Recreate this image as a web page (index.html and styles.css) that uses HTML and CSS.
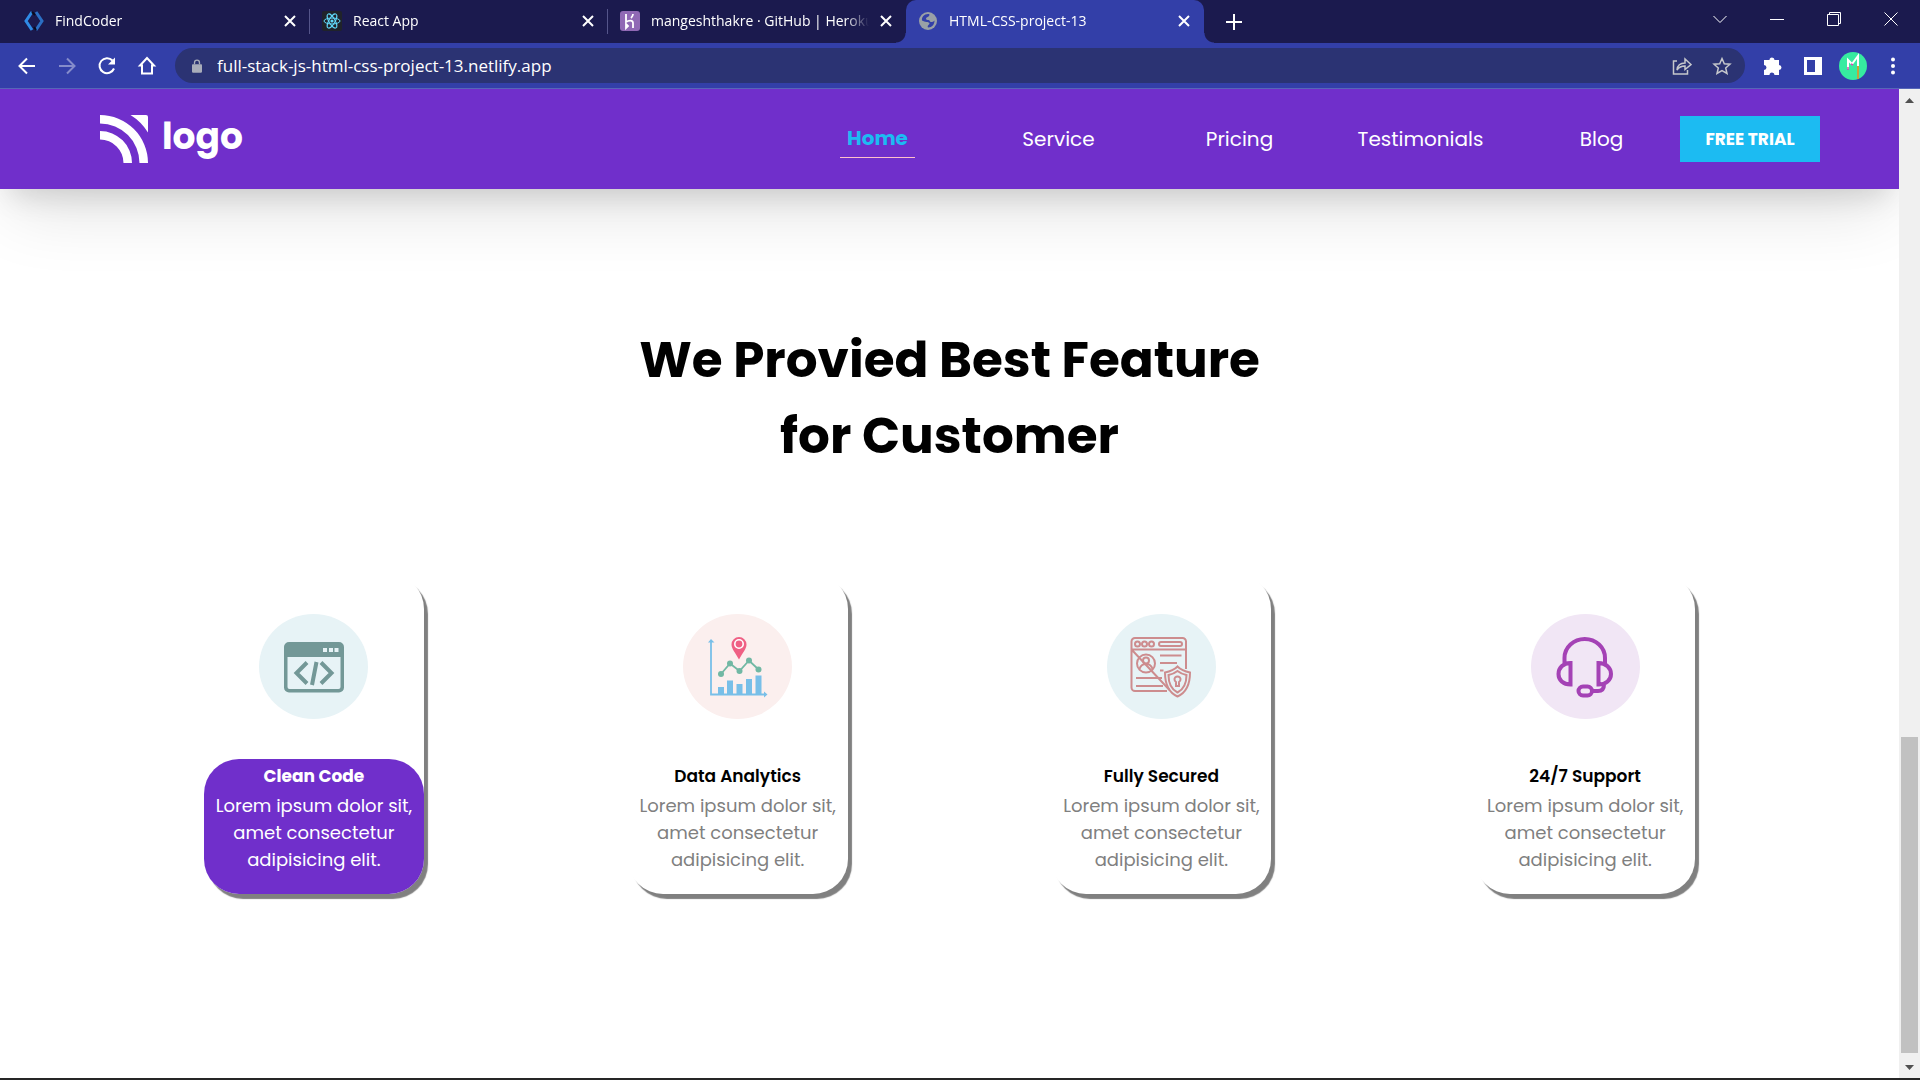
FILE: index.html
```html
<!DOCTYPE html>
<html lang="en">
<head>
<meta charset="utf-8">
<title>HTML-CSS-project-13</title>
<link rel="stylesheet" href="styles.css">
</head>
<body>
<div class="browser">
  <div class="tabstrip">
    <div class="tab">
      <svg class="favicon" viewBox="0 0 20 20" fill="none"><path d="M8 1 2 10l6 9" stroke="#2f8be6" stroke-width="3"/><path d="m12 1 6 9-6 9" stroke="#2b6fc4" stroke-width="3"/><path d="m8 1 3 3M12 19l-2-3" stroke="#0b0b1c" stroke-width="2"/></svg>
      <span class="tab-title">FindCoder</span>
      <button class="tab-close" aria-label="Close tab"><svg viewBox="0 0 12 12"><path d="m1 1 10 10M11 1 1 11"/></svg></button>
    </div>
    <div class="tab">
      <svg class="favicon" viewBox="0 0 20 20" fill="none"><rect width="20" height="20" rx="2" fill="#20232a"/><g stroke="#61dafb"><ellipse cx="10" cy="10" rx="8" ry="3"/><ellipse cx="10" cy="10" rx="8" ry="3" transform="rotate(60 10 10)"/><ellipse cx="10" cy="10" rx="8" ry="3" transform="rotate(120 10 10)"/></g><circle cx="10" cy="10" r="1.6" fill="#61dafb"/></svg>
      <span class="tab-title">React App</span>
      <button class="tab-close" aria-label="Close tab"><svg viewBox="0 0 12 12"><path d="m1 1 10 10M11 1 1 11"/></svg></button>
    </div>
    <div class="tab tab-last">
      <svg class="favicon" viewBox="0 0 20 20" fill="none"><rect width="20" height="20" rx="3" fill="#9069b5"/><path d="M6 3v8c3-2 7-2 7 1v5M13 3c0 2-1 3-2 4M6 13v4l2-2z" stroke="#fff" stroke-width="1.8"/></svg>
      <span class="tab-title">mangeshthakre · GitHub | Heroku</span>
      <button class="tab-close" aria-label="Close tab"><svg viewBox="0 0 12 12"><path d="m1 1 10 10M11 1 1 11"/></svg></button>
    </div>
    <div class="tab tab-active">
      <svg class="favicon" viewBox="0 0 20 20"><circle cx="10" cy="10" r="9" fill="#9aa0a6"/><path d="M10 3c1.500 0 2 .5 1 2s-3 1-3 2.500 1 1.500 2.500 1.500 1 2 2.500 2 2.500-.5 3.500-1.500c0 4-2.500 7-6 7-1 0-1-1-.5-2s1.500-1 1.500-2-1.500-1.500-3-1.500-3-1-4.500-1.500C3.500 6 6 3 10 3z" fill="#333fa8"/></svg>
      <span class="tab-title">HTML-CSS-project-13</span>
      <button class="tab-close" aria-label="Close tab"><svg viewBox="0 0 12 12"><path d="m1 1 10 10M11 1 1 11"/></svg></button>
    </div>
    <button class="tab-new" aria-label="New tab"><svg viewBox="0 0 16 16"><path d="M8 0v16M0 8h16"/></svg></button>
    <div class="window-controls">
      <button aria-label="Search tabs"><svg viewBox="0 0 14 14"><path d="m.5 4 6.500 6.500L13.500 4"/></svg></button>
      <button aria-label="Minimize"><svg viewBox="0 0 14 14"><path d="M0 7.500h14"/></svg></button>
      <button aria-label="Restore"><svg viewBox="0 0 14 14"><path d="M.5 2.500h11v11H.5zM2.500 2.500v-2h11v11h-2"/></svg></button>
      <button aria-label="Close"><svg viewBox="0 0 14 14"><path d="m.5.5 13 13M13.500.5l-13 13"/></svg></button>
    </div>
  </div>

  <div class="toolbar">
    <button class="tool" aria-label="Back"><svg viewBox="0 0 20 20"><path d="M18 10H3M10 2.500 2.500 10l7.500 7.500"/></svg></button>
    <button class="tool tool-off" aria-label="Forward"><svg viewBox="0 0 20 20"><path d="M2 10h15M10 2.500l7.500 7.500-7.500 7.500"/></svg></button>
    <button class="tool" aria-label="Reload"><svg viewBox="0 0 20 20"><path d="M17 12.500A7.500 7.500 0 1 1 15.500 4.500"/><path d="M18 1.500V8.500h-7z" class="solid"/></svg></button>
    <button class="tool" aria-label="Home"><svg viewBox="0 0 20 20"><path d="M5 17.500V9.500H3L10 2l7 7.500H15v8z"/></svg></button>
    <div class="address">
      <svg class="lock" viewBox="0 0 12 16"><rect y="6" width="12" height="10" rx="1" fill="#a9adba"/><path d="M3 6V4a3 3 0 0 1 6 0v2" fill="none" stroke="#a9adba" stroke-width="1.600"/></svg>
      <input class="url" type="text" aria-label="Address" value="full-stack-js-html-css-project-13.netlify.app">
      <button class="tool tool-dim" aria-label="Share"><svg viewBox="0 0 20 20"><path d="M5 5H1.500v13h14v-4M5 14c.5-5 3-7 8-7V3l6 5.500-6 5V10c-4 0-6 1-8 4z"/></svg></button>
      <button class="tool tool-dim" aria-label="Bookmark"><svg viewBox="0 0 20 20"><path d="m10 2.500 2.300 5.200 5.700.5-4.300 3.800 1.300 5.500L10 14.600 5 17.500 6.300 12 2 8.200l5.700-.5z"/></svg></button>
    </div>
    <button class="tool" aria-label="Extensions"><svg viewBox="0 0 20 20"><path class="solid" d="M1 4h5.500a2.500 2.500 0 0 1 5 0H16v5a2.500 2.500 0 0 1 0 5v5h-4.500a2.500 2.500 0 0 0-5 0H1v-5a2.500 2.500 0 0 0 0-5z"/></svg></button>
    <button class="tool" aria-label="Side panel"><svg viewBox="0 0 20 20"><path class="solid" fill-rule="evenodd" d="M1 1h18v18H1zM4 4v12h8V4z"/></svg></button>
    <button class="tool" aria-label="Profile"><svg class="avatar" viewBox="0 0 28 28"><circle cx="14" cy="14" r="14" fill="#36eba0"/><path d="M19 12v15" stroke="#c2a33c" stroke-width="2"/><path d="M9 17V8l4 4 6-8v10" stroke="#fff" stroke-width="2"/><path d="M9 15v3M12 12l2 1" stroke="#d24bb0" stroke-width="1.500"/></svg></button>
    <button class="tool" aria-label="Menu"><svg viewBox="0 0 20 20"><g class="solid"><circle cx="10" cy="3.500" r="2"/><circle cx="10" cy="10" r="2"/><circle cx="10" cy="16.500" r="2"/></g></svg></button>
  </div>

  <div class="viewport">
    <div class="page">
      <header class="site-header">
        <a class="brand" href="#">
          <svg class="brand-mark" viewBox="0 0 48 48" fill="#fff"><path d="M0 0a48 48 0 0 1 48 48h-8.500A39.500 39.500 0 0 0 0 8.500zM0 16a32 32 0 0 1 32 32h-8.500A23.500 23.500 0 0 0 0 24.500zM30.500 0H46a2 2 0 0 1 2 2v15.500A54 54 0 0 0 30.500 0z"/></svg>
          <span class="brand-name">logo</span>
        </a>
        <nav class="site-nav">
          <a class="nav-link nav-current" href="#">Home</a>
          <a class="nav-link" href="#">Service</a>
          <a class="nav-link" href="#">Pricing</a>
          <a class="nav-link" href="#">Testimonials</a>
          <a class="nav-link" href="#">Blog</a>
        </nav>
        <button class="trial">FREE TRIAL</button>
      </header>

      <main class="features">
        <h1>We Provied Best Feature<br>for Customer</h1>
        <div class="cards">
          <article class="card card-active">
            <div class="badge badge-aqua">
              <svg viewBox="0 0 60 60"><path fill="#739897" fill-rule="evenodd" d="M5 5h50a5 5 0 0 1 5 5v40.500a5 5 0 0 1-5 5H5a5 5 0 0 1-5-5V10a5 5 0 0 1 5-5zM3.500 20v30a2 2 0 0 0 2 2h49a2 2 0 0 0 2-2V20zM39 11v4h4v-4zM45 11v4h4v-4zM50.500 11v4h4v-4z"/><path d="M23 25.500 12.500 36 23 46.500M37 25.500 47.500 36 37 46.500M32.500 25 28 48" fill="none" stroke="#739897" stroke-width="4"/></svg>
            </div>
            <div class="card-text">
              <h2>Clean Code</h2>
              <p>Lorem ipsum dolor sit, amet consectetur adipisicing elit.</p>
            </div>
          </article>
          <article class="card">
            <div class="badge badge-rose">
              <svg viewBox="0 0 60 60" fill="none"><path d="M3 3v54.500h55" stroke="#78bfe8" stroke-width="1.800"/><path d="M0 5.500 3 2l3.500 3.500zM56 54.500l3.500 3-3.500 3z" fill="#78bfe8"/><path d="M10 50h6v7.500h-6zM19 43.500h6v14h-6zM28.500 47h6v10.500h-6zM38 42h6v15.500h-6zM47.500 38.500h6v19h-6z" fill="#78bfe8"/><path d="m13 37 9-10.500 9.500 7.500 9.500-10.500 9.500 9" stroke="#71b8a4" stroke-width="1.800"/><g fill="#71b8a4"><circle cx="13" cy="37" r="3"/><circle cx="22" cy="26.500" r="3"/><circle cx="31.500" cy="34" r="3"/><circle cx="41" cy="23.500" r="3"/><circle cx="50.500" cy="32.500" r="3"/></g><path d="M31 22.500C27.500 16 23.500 12 23.500 7.500a7.500 7.500 0 0 1 15 0c0 4.500-4 8.500-7.500 15z" fill="#ef6084"/><circle cx="31" cy="7" r="4.200" stroke="#fff" stroke-width="1.600"/></svg>
            </div>
            <div class="card-text">
              <h2>Data Analytics</h2>
              <p>Lorem ipsum dolor sit, amet consectetur adipisicing elit.</p>
            </div>
          </article>
          <article class="card">
            <div class="badge badge-aqua">
              <svg viewBox="0 0 60 60" fill="none" stroke="#cd8c8e" stroke-width="2"><path d="M36 54H4a3.500 3.500 0 0 1-3.500-3.500V4.500A3.500 3.500 0 0 1 4 1h47.500A3.500 3.500 0 0 1 55 4.500V32M.5 12.500H55M1 13l37.500 40"/><circle cx="6.500" cy="7" r="2.500"/><circle cx="13.500" cy="7" r="2.500"/><circle cx="20.500" cy="7" r="2.500"/><rect x="28" y="5" width="23" height="4" rx="2"/><circle cx="15" cy="26.500" r="9"/><circle cx="15" cy="23.500" r="3"/><path d="M8.500 32c1-3.500 3.500-5 6.500-5s5.500 1.500 6.500 5M29 18.500h21.500M29 26h17M29 33.500h3.500M5 41h26M5 49h27"/><path d="M46.500 29.500c3 3 7.500 5 12.500 6 0 12-3.500 20-12.500 24C37.500 55.500 34 47.500 34 35.500c5-1 9.500-3 12.500-6z"/><path d="M46.500 34c2.500 2 5.500 3.300 9 4 0 9-3 14.500-9 17.500-6-3-9-8.500-9-17.500 3.500-.7 6.500-2 9-4z"/><path d="M45 45a3 3 0 1 1 3 0v4h-3z"/></svg>
            </div>
            <div class="card-text">
              <h2>Fully Secured</h2>
              <p>Lorem ipsum dolor sit, amet consectetur adipisicing elit.</p>
            </div>
          </article>
          <article class="card">
            <div class="badge badge-violet">
              <svg viewBox="0 0 60 60" fill="none" stroke="#a442b5" stroke-width="4"><path d="M9.500 27V21a20.250 19 0 0 1 40.500 0v6M15.500 26v21.500C8 47.500 3.500 43 3.500 37S8 26 15.500 26zM43.500 26v21.500C51 47.500 56 43 56 37s-5-11-12.500-11zM37 54h6c4 0 6-2 6-6.500"/><rect x="23.500" y="49.500" width="13.500" height="9" rx="4.500"/></svg>
            </div>
            <div class="card-text">
              <h2>24/7 Support</h2>
              <p>Lorem ipsum dolor sit, amet consectetur adipisicing elit.</p>
            </div>
          </article>
        </div>
      </main>
    </div>
    <div class="scrollbar" aria-hidden="true">
      <svg viewBox="0 0 21 21"><path d="M6 14h9l-4.500-5z"/></svg>
      <div class="track"><div class="thumb"></div></div>
      <svg viewBox="0 0 21 21"><path d="M6 8h9l-4.500 5z"/></svg>
    </div>
  </div>
</div>
</body>
</html>
```
FILE: styles.css
```css
* { box-sizing: border-box; }

body {
  margin: 0;
  background: #fff;
  font-family: Poppins, Inter, sans-serif;
}

button {
  margin: 0;
  padding: 0;
  border: 0;
  background: none;
  color: inherit;
  font: inherit;
}

.browser {
  display: flex;
  flex-direction: column;
  min-height: 100vh;
  border-bottom: 2px solid #262626;
}

/* Tab strip */
.tabstrip {
  display: flex;
  height: 43px;
  padding: 0 1px 0 12px;
  background: #1b1a4e;
  color: #fff;
  font-family: "Segoe UI", "Open Sans", sans-serif;
  font-size: 14px;
}

.tab {
  display: flex;
  align-items: center;
  flex: 0 1 298px;
  min-width: 0;
  gap: 11px;
  padding: 0 14px 2px 12px;
  background: linear-gradient(#55558a, #55558a) right 0 top 9px / 1px 25px no-repeat;
}

.tab-last { background: none; }

.tab-active {
  position: relative;
  border-radius: 10px 10px 0 0;
  background: #333fa8;
}

.tab-active::before,
.tab-active::after {
  content: "";
  position: absolute;
  bottom: 0;
  width: 10px;
  height: 10px;
}

.tab-active::before {
  right: 100%;
  background: radial-gradient(circle at 0 0, transparent 9px, #333fa8 10px);
}

.tab-active::after {
  left: 100%;
  background: radial-gradient(circle at 100% 0, transparent 9px, #333fa8 10px);
}

.favicon {
  flex: none;
  width: 20px;
  height: 20px;
}

.tab-title {
  flex: 1;
  overflow: hidden;
  white-space: nowrap;
  mask-image: linear-gradient(to left, transparent, #000 24px);
}

.tab-close {
  display: flex;
  flex: none;
}

.tab-close svg {
  width: 12px;
  height: 12px;
  fill: none;
  stroke: #fff;
  stroke-width: 2;
}

.tab-new {
  display: flex;
  align-items: center;
  padding: 0 22px;
}

.tab-new svg {
  width: 16px;
  height: 16px;
  stroke: #fff;
  stroke-width: 2;
}

.window-controls {
  display: flex;
  margin-left: auto;
}

.window-controls button {
  display: flex;
  align-items: center;
  justify-content: center;
  width: 57px;
  padding-bottom: 6px;
}

.window-controls svg {
  width: 14px;
  height: 14px;
  fill: none;
  stroke: #fff;
}

/* Toolbar */
.toolbar {
  display: flex;
  align-items: center;
  height: 46px;
  padding: 0 7px 0 7px;
  border-bottom: 1px solid #5766b8;
  background: #333fa8;
}

.tool {
  display: flex;
  align-items: center;
  justify-content: center;
  flex: none;
  width: 40px;
  height: 34px;
}

.tool svg {
  width: 20px;
  height: 20px;
  fill: none;
  stroke: #fff;
  stroke-width: 2;
}

.tool .solid {
  fill: #fff;
  stroke: none;
}

.tool .avatar {
  width: 28px;
  height: 28px;
}

.tool .avatar circle { stroke: none; }

.tool-off { opacity: .4; }
.tool-dim svg { stroke: #c6c8cc; stroke-width: 1.5; }

.address {
  display: flex;
  align-items: center;
  flex: 1;
  height: 35px;
  margin: 0 8px;
  padding: 0 3px 0 17px;
  border-radius: 18px;
  background: #2b3373;
}

.lock {
  width: 10px;
  height: 14px;
}

.url {
  flex: 1;
  min-width: 0;
  padding: 0 0 0 15px;
  border: 0;
  outline: 0;
  background: none;
  color: #fff;
  font: 17px "Segoe UI", "Open Sans", sans-serif;
}

/* Page area and its scrollbar */
.viewport {
  display: flex;
  flex: 1;
}

.page {
  flex: 1;
  min-width: 0;
  overflow: hidden;
}

.scrollbar {
  display: flex;
  flex-direction: column;
  width: 21px;
  background: #f0f0f0;
}

.scrollbar svg {
  width: 21px;
  height: 21px;
  fill: #505050;
}

.track {
  display: flex;
  flex-direction: column;
  flex: 1;
  padding: 0 2px 4px;
}

.thumb {
  height: 316px;
  margin-top: auto;
  background: #c1c1c1;
}

/* Site header */
.site-header {
  display: flex;
  align-items: center;
  height: 100px;
  padding: 0 79px 0 100px;
  background: #702fcb;
  box-shadow:
    0 15px 30px -10px rgba(0, 0, 0, .15),
    0 30px 70px -10px rgba(0, 0, 0, .12);
}

.brand {
  display: flex;
  align-items: center;
  gap: 14px;
  margin-right: auto;
  color: #fff;
  text-decoration: none;
}

.brand-mark {
  width: 48px;
  height: 48px;
}

.brand-name {
  padding-bottom: 4px;
  font-size: 36px;
  font-weight: 700;
  line-height: 44px;
}

.site-nav {
  display: grid;
  grid-template-columns: repeat(5, 1fr);
  flex: 0 1 905px;
  align-items: center;
  justify-items: center;
  margin-right: -12px;
}

.nav-link {
  color: #fff;
  font-size: 20px;
  line-height: 30px;
  text-decoration: none;
}

.nav-current {
  padding: 2px 7px 4px;
  border-bottom: 1px solid pink;
  color: #1cbbf2;
  font-weight: 700;
}

.trial {
  width: 140px;
  height: 46px;
  background: #1cbbf2;
  color: #fff;
  font-size: 17px;
  font-weight: 700;
}

/* Features */
.features { padding: 133px 102px 184px; }

h1 {
  margin: 0;
  font-size: 50px;
  font-weight: 700;
  line-height: 76px;
  text-align: center;
}

.cards {
  display: grid;
  grid-template-columns: repeat(4, 1fr);
  justify-items: center;
  padding-top: 100px;
}

.card {
  width: 220px;
  padding-top: 40px;
  border-radius: 35px;
  background: #fff;
  box-shadow: 4px 5px 1px gray;
  text-align: center;
}

.badge {
  display: flex;
  align-items: center;
  justify-content: center;
  width: 109px;
  height: 105px;
  margin: 0 auto 40px;
  border-radius: 50%;
}

.badge svg {
  width: 60px;
  height: 60px;
  overflow: visible;
}

.badge-aqua { background: #e7f3f6; }
.badge-rose { background: #fbefee; }
.badge-violet { background: #f1e6f5; }

.card-text {
  height: 135px;
  padding: 5px 8px 0;
  border-radius: 35px;
}

.card-text h2 {
  margin: 0 0 4px;
  font-size: 17px;
  font-weight: 600;
  line-height: 24px;
}

.card-text p {
  margin: 0;
  color: gray;
  font-size: 18px;
  line-height: 27px;
}

.card-active .card-text {
  background: #702fcb;
  color: #fff;
}

.card-active h2 { font-weight: 700; }
.card-active p { color: #fff; }
```
